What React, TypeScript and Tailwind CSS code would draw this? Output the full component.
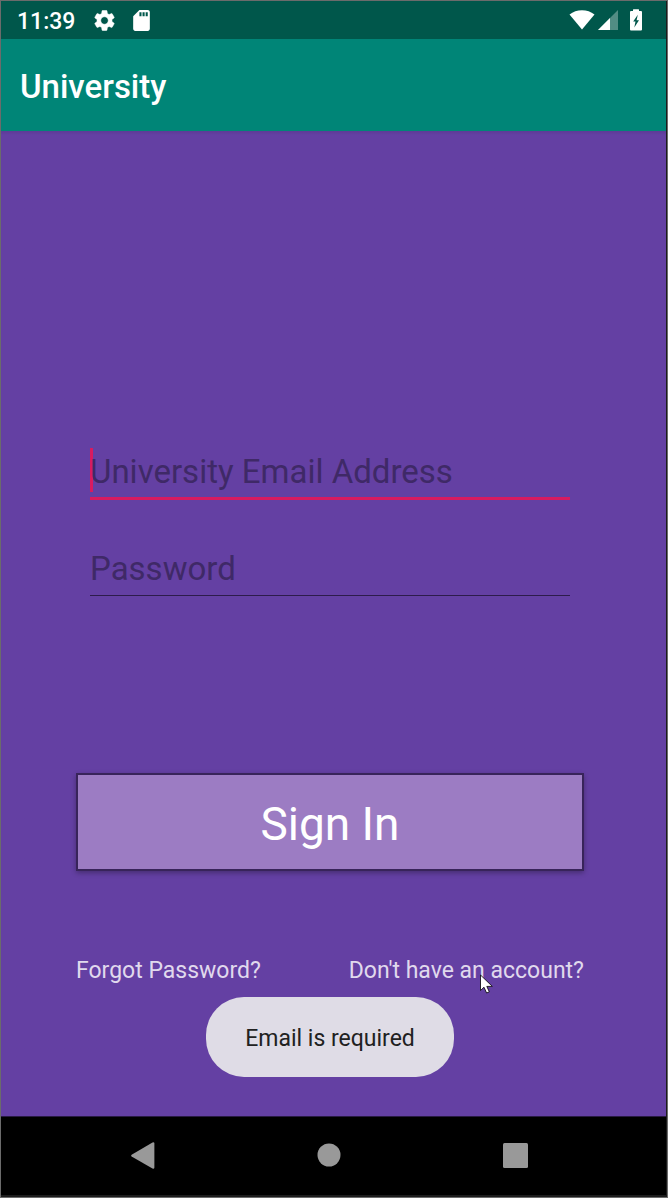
import React from "react";

function StatusBar() {
  return (
    <div className="flex h-[38px] items-center justify-between bg-[#00574b] pr-6 pl-4 text-white">
      <div className="flex items-center">
        <time className="w-[75px] pt-[3px] text-[23px] leading-7 font-medium">11:39</time>
        <svg aria-hidden="true" className="size-[25px]" viewBox="0 0 24 24" fill="currentColor" stroke="currentColor" strokeWidth=".5">
          <path d="M19.14 12.94c.04-.3.06-.61.06-.94 0-.32-.02-.64-.07-.94l2.03-1.58c.18-.14.23-.41.12-.61l-1.92-3.32c-.12-.22-.37-.29-.59-.22l-2.39.96c-.5-.38-1.03-.7-1.62-.94l-.36-2.54c-.04-.24-.24-.41-.48-.41h-3.84c-.24 0-.43.17-.47.41l-.36 2.54c-.59.24-1.13.57-1.62.94l-2.39-.96c-.22-.08-.47 0-.59.22L2.74 8.87c-.12.21-.08.47.12.61l2.03 1.58c-.05.3-.09.63-.09.94s.02.64.07.94l-2.03 1.58c-.18.14-.23.41-.12.61l1.92 3.32c.12.22.37.29.59.22l2.39-.96c.5.38 1.03.7 1.62.94l.36 2.54c.05.24.24.41.48.41h3.84c.24 0 .44-.17.47-.41l.36-2.54c.59-.24 1.13-.56 1.62-.94l2.39.96c.22.08.47 0 .59-.22l1.92-3.32c.12-.22.07-.47-.12-.61l-2.01-1.58zM12 15.6c-1.98 0-3.6-1.62-3.6-3.6s1.62-3.6 3.6-3.6 3.6 1.62 3.6 3.6-1.62 3.6-3.6 3.6z" />
        </svg>
        <svg aria-hidden="true" className="ml-3 size-[25px]" viewBox="0 0 24 24" fill="currentColor">
          <path d="M18 2h-8L4.02 8 4 20c0 1.100.9 2 2 2h12c1.100 0 2-.9 2-2V4c0-1.100-.9-2-2-2zm-6 6h-2V4h2v4zm3 0h-2V4h2v4zm3 0h-2V4h2v4z" />
        </svg>
      </div>
      <div className="flex items-center">
        <svg aria-hidden="true" className="h-5 w-[26px]" viewBox="0 0 26 20" fill="currentColor">
          <path d="M13 19.500 .5 4.500C4 1.700 8.300 .2 13 .2s9 1.500 12.500 4.300z" />
        </svg>
        <svg aria-hidden="true" className="ml-[3px] size-5" viewBox="0 0 20 20" fill="currentColor">
          <path d="M0 20 20 0v20z" opacity=".32" />
          <path d="M0 20 12 8v12z" />
        </svg>
        <svg aria-hidden="true" className="ml-3 h-[22px] w-3" viewBox="0 0 12 22" fill="currentColor">
          <path fillRule="evenodd" d="M3 2V.8Q3 .3 3.500 .3h5q.5 0 .5.500V2h2q1 0 1 1v17.500q0 1-1 1H1q-1 0-1-1V3q0-1 1-1zm4.800 3.800L3.200 12.500h2.300L4.300 18.500 9 11.200H6.600z" />
        </svg>
      </div>
    </div>
  );
}

function NavigationBar() {
  return (
    <nav aria-label="System" className="flex h-[79px] items-center justify-center gap-[138px] border-t border-[#281a42] bg-black pr-[9px] pb-[2px] text-[#999999]">
      <button type="button" aria-label="Back" className="flex size-12 items-center justify-center">
        <svg className="h-[27px] w-6" viewBox="0 0 24 27" fill="currentColor">
          <path d="M.6 12.700 21.500 .4Q23.400 -.2 23.400 1.600v24q0 1.600-1.900.8L.6 14.500q-1-.9 0-1.800z" />
        </svg>
      </button>
      <button type="button" aria-label="Home" className="flex size-12 items-center justify-center">
        <svg className="size-6" viewBox="0 0 24 24" fill="currentColor">
          <circle cx="12" cy="12" r="11.500" />
        </svg>
      </button>
      <button type="button" aria-label="Recent apps" className="flex size-12 items-center justify-center">
        <svg className="size-[25px]" viewBox="0 0 25 25" fill="currentColor">
          <rect width="25" height="25" rx="1.500" />
        </svg>
      </button>
    </nav>
  );
}

export default function App() {
  return (
    <div className="min-h-screen border border-[#6b6b6b] bg-[#1c1c1c] pr-px pb-[2px] font-['Roboto',sans-serif]">
      <div className="flex min-h-[calc(100vh-4px)] flex-col">
        <StatusBar />
        <header className="flex h-[92px] items-center bg-[#008577] px-[19px] pt-1">
          <h1 className="text-[33px] leading-10 font-medium text-white">University</h1>
        </header>
        <main className="relative flex flex-1 flex-col bg-[#6440a3] bg-linear-to-b from-[#5c3b96] to-[#6440a3] to-[4px] pt-[309px] pr-[82px] pl-[75px]">
          <form className="flex flex-col" onSubmit={(e) => e.preventDefault()}>
            <div className="relative mx-[14px]">
              <span aria-hidden="true" className="absolute top-2 left-0 h-11 w-[3px] bg-[#d81b60]" />
              <input
                type="email"
                aria-label="University Email Address"
                placeholder="University Email Address"
                className="relative block h-[60px] w-full border-b-[3px] border-[#d81b60] bg-transparent pt-[5px] text-[33px] text-white caret-transparent outline-none placeholder:text-[#3f2967]"
              />
            </div>
            <div className="mx-[14px] mt-9">
              <input
                type="password"
                aria-label="Password"
                placeholder="Password"
                className="block h-[60px] w-full border-b border-[#2d1c4b] bg-transparent pt-[5px] text-[33px] text-white outline-none placeholder:text-[#3f2967]"
              />
            </div>
            <button
              type="submit"
              className="mt-[177px] h-[98px] border-2 border-[#38245a] bg-[#9c7cc3] pt-1 text-[46px] leading-none text-white shadow-[0_2px_5px_rgba(0,0,0,0.3)]"
            >
              Sign In
            </button>
          </form>
          <div className="mt-[84px] flex justify-between text-[23px] leading-8 text-[#e0d9ed]">
            <a href="#forgot">Forgot Password?</a>
            <a href="#register">Don't have an account?</a>
          </div>
          <div className="absolute inset-x-0 bottom-[39px] flex justify-center pr-[7px]">
            <div role="status" className="rounded-[38px] bg-[#dfdce6] px-[39px] pt-[26px] pb-[22px] text-[23px] leading-8 text-[#212121]">
              Email is required
            </div>
          </div>
          <svg aria-hidden="true" className="absolute top-[843px] left-[479px] h-5 w-[13px]" viewBox="0 0 13 20">
            <path d="M.5 1v15.500l3.500-3.300 2.600 5.800 2.700-1.200-2.500-5.400h5.500z" fill="#fff" stroke="#000" strokeWidth=".8" />
          </svg>
        </main>
        <NavigationBar />
      </div>
    </div>
  );
}
